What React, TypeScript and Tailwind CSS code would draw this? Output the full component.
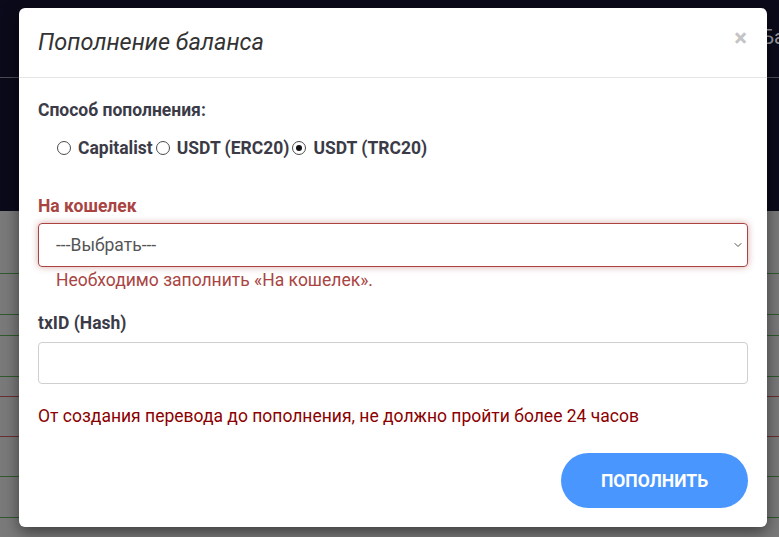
import React from 'react';
import { ChevronDown } from 'lucide-react';

const rows = [
  { h: 'h-[63px]', c: 'border-[#2f5a2f]' },
  { h: 'h-[41px]', c: 'border-[#2f5a2f]' },
  { h: 'h-[21px]', c: 'border-[#2f5a2f]' },
  { h: 'h-[41px]', c: 'border-[#2f5a2f]' },
  { h: 'h-[20px]', c: 'border-[#6b2f2f]' },
  { h: 'h-[40px]', c: 'border-[#6b2f2f]' },
  { h: 'h-[40px]', c: 'border-[#2f5a2f]' },
  { h: 'h-[41px]', c: 'border-[#2f5a2f]' },
];

function Radio({ label, checked }: { label: string; checked?: boolean }) {
  return (
    <label className="flex items-center gap-[7px]">
      <span className="w-[14px] h-[14px] rounded-full border border-[#4a4a4a] bg-white flex items-center justify-center">
        {checked && <span className="w-[6px] h-[6px] rounded-full bg-[#111]" />}
      </span>
      <span className="font-bold">{label}</span>
    </label>
  );
}

export default function App() {
  return (
    <div className="relative w-[779px] h-[537px] overflow-hidden bg-[#7a7a7a] font-['Roboto','Liberation_Sans',sans-serif]">
      {/* страница под модалкой */}
      <div className="h-[211px] bg-[#0b0a1a]">
        <div className="h-[78px] border-b border-[#4b4b55] flex justify-end items-start pt-[22px]">
          <span className="text-[20px] text-[#9a9aa2] -mr-[6px]">Ба</span>
        </div>
      </div>
      <div className="flex flex-col">
        {rows.map((r, i) => (
          <div key={i} className={`${r.h} border-b ${r.c}`} />
        ))}
      </div>

      {/* модальное окно */}
      <div className="absolute left-[19px] top-[8px] w-[748px] bg-white rounded-[6px] shadow-[0_5px_15px_rgba(0,0,0,0.5)]">
        <div className="h-[70px] px-[19px] flex items-center justify-between border-b border-[#e5e5e5]">
          <h4 className="italic text-[23.5px] text-[#333] pt-[1px]">Пополнение баланса</h4>
          <span className="text-[24px] font-bold text-[#c4c4c4] leading-none -mt-[10px] mr-[1px]">×</span>
        </div>

        <div className="px-[19px] pt-[21px] pb-[19px] text-[17.5px] leading-[22px] text-[#3b3b48]">
          <div className="font-bold">Способ пополнения:</div>
          <div className="flex items-center gap-[3px] pl-[19px] mt-[16px]">
            <Radio label="Capitalist" />
            <Radio label="USDT (ERC20)" />
            <Radio label="USDT (TRC20)" checked />
          </div>

          <div className="mt-[36px] font-bold text-[#a94442]">На кошелек</div>
          <div className="mt-[6px] h-[44px] rounded-[4px] border border-[#a94442] shadow-[0_0_7px_rgba(169,68,66,0.45)] flex items-center justify-between pl-[17px] pr-[3px]">
            <span className="text-[#555]">---Выбрать---</span>
            <ChevronDown className="w-[12px] h-[12px] text-[#555]" strokeWidth={2} />
          </div>
          <div className="mt-[2px] pl-[18px] text-[#a94442]">Необходимо заполнить «На кошелек».</div>

          <div className="mt-[21px] font-bold">txID (Hash)</div>
          <div className="mt-[8px] h-[42px] rounded-[4px] border border-[#cfcfcf]" />

          <div className="mt-[21px] text-[#8b0000]">От создания перевода до пополнения, не должно пройти более 24 часов</div>

          <div className="flex justify-end mt-[26px]">
            <button className="w-[187px] h-[55px] rounded-full bg-[#4a96ff] text-white font-bold text-[17.5px] uppercase">
              Пополнить
            </button>
          </div>
        </div>
      </div>
    </div>
  );
}
